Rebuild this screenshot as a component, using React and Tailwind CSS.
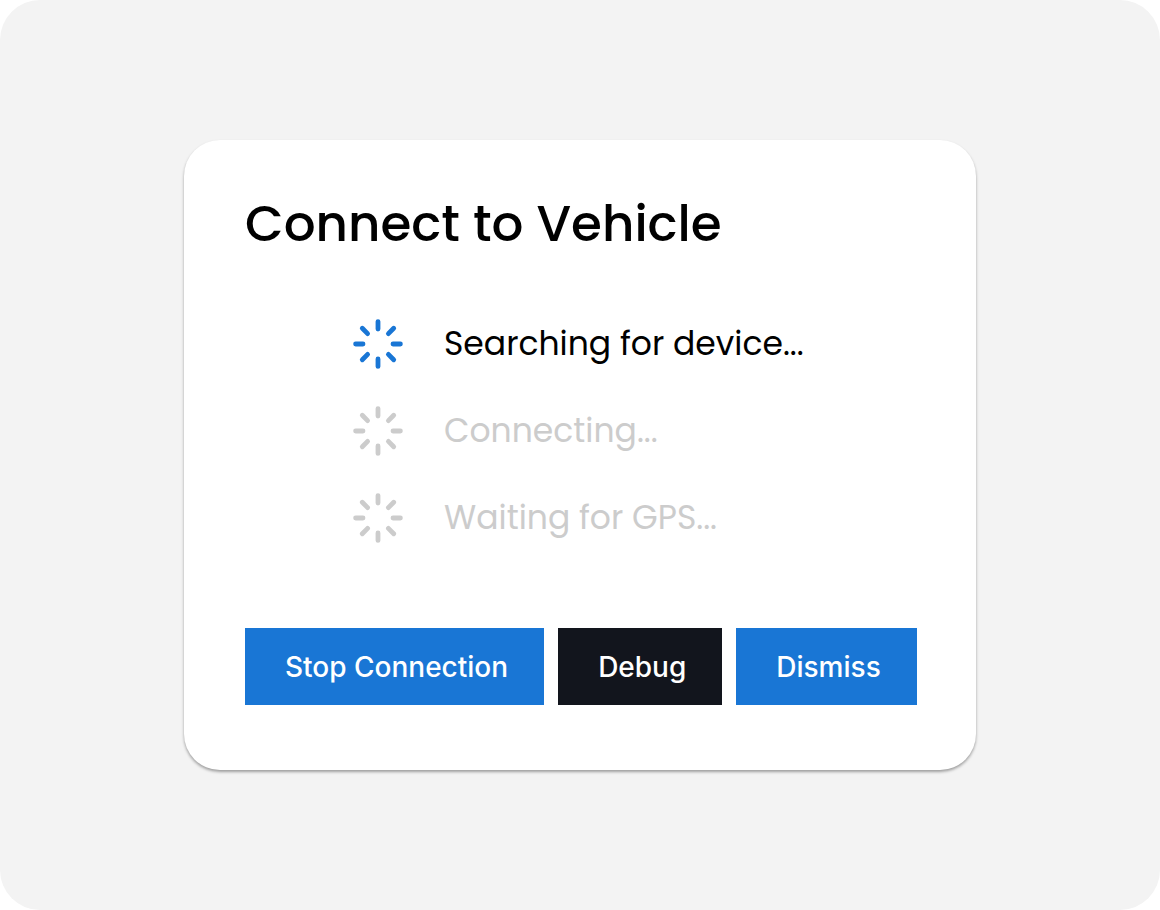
import clsx from 'clsx'

const STEPS = [
  { id: 'search', label: 'Searching for device...', active: true },
  { id: 'connect', label: 'Connecting...', active: false },
  { id: 'gps', label: 'Waiting for GPS...', active: false },
]

function Spinner({ className }) {
  return (
    <svg
      viewBox="0 0 50 50"
      fill="none"
      stroke="currentColor"
      strokeWidth="4.8"
      strokeLinecap="round"
      className={clsx('size-[50px] shrink-0', className)}
      aria-hidden="true"
    >
      <path d="M25 2.6V10M25 40v7.4M2.6 25H10M40 25h7.4" />
      <path d="M9.3 9.3l5.3 5.3M35.4 35.4l5.3 5.3M9.3 40.7l5.3-5.3M35.4 14.6l5.3-5.3" />
    </svg>
  )
}

function Step({ label, active }) {
  return (
    <li className="flex items-center gap-[41px]">
      <Spinner className={active ? 'text-[#1976d5]' : 'text-[#cccccc]'} />
      <span className={clsx('text-[33px] leading-[50px]', active ? 'text-black' : 'text-[#cccccc]')}>
        {label}
      </span>
    </li>
  )
}

function Button({ dark, children }) {
  return (
    <button
      type="button"
      className={clsx(
        'pt-[19px] pr-9 pb-[17px] pl-10 text-[28px] leading-[41px] font-medium whitespace-nowrap text-white',
        dark ? 'bg-[#12151d]' : 'bg-[#1976d5]'
      )}
    >
      {children}
    </button>
  )
}

export default function App() {
  return (
    <div className="bg-white font-[Poppins,Inter,sans-serif]">
      <main className="flex min-h-screen items-center justify-center rounded-[40px] bg-[#f3f3f3]">
        <section className="w-full max-w-[792px] rounded-[36px] bg-white px-[61px] pt-[51px] pb-[65px] shadow-[0_2px_3px_rgba(0,0,0,0.35)]">
          <h1 className="text-[50px] leading-[66px] font-medium text-black">Connect to Vehicle</h1>

          {/* Connection progress */}
          <ul className="mt-[62px] flex flex-col gap-[37px] pl-[108px]">
            {STEPS.map((step) => (
              <Step key={step.id} label={step.label} active={step.active} />
            ))}
          </ul>

          {/* Actions */}
          <div className="mt-[85px] flex gap-3.5 font-[Inter,sans-serif]">
            <Button>Stop Connection</Button>
            <Button dark>Debug</Button>
            <Button>Dismiss</Button>
          </div>
        </section>
      </main>
    </div>
  )
}
